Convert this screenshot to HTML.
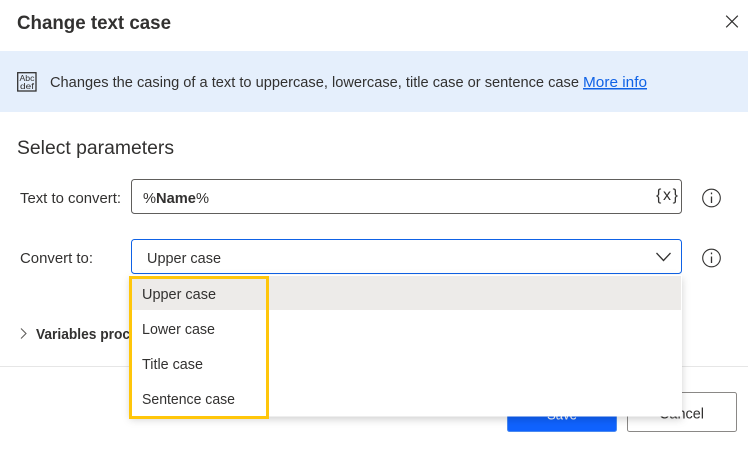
<!DOCTYPE html>
<html><head><meta charset="utf-8"><style>
html,body{margin:0;padding:0;background:#fff}
svg{display:block}
text{font-family:"Liberation Sans",sans-serif;font-size:15px;fill:#323130}
</style></head><body>
<svg width="748" height="450" viewBox="0 0 748 450" xmlns="http://www.w3.org/2000/svg">
<defs>
<filter id="s" x="-10%" y="-10%" width="120%" height="125%"><feDropShadow dx="0" dy="3" stdDeviation="4" flood-color="#000" flood-opacity=".18"/></filter>
</defs>
<rect width="748" height="450" fill="#fff"/>
<text x="17" y="29" textLength="154" lengthAdjust="spacingAndGlyphs" style="font-size:19px;font-weight:bold">Change text case</text>
<path d="M726.200 15.700l11.600 11.600M737.800 15.700l-11.600 11.600" stroke="#323130" stroke-width="1.2" fill="none"/>
<rect y="51" width="748" height="61" fill="#e5effc"/>
<rect x="17.700" y="72.700" width="18.300" height="18.300" fill="none" stroke="#323130" stroke-width="1.3"/>
<text x="19.500" y="81" textLength="15" lengthAdjust="spacingAndGlyphs" style="font-size:8.500px">Abc</text>
<text x="20" y="89" textLength="14" lengthAdjust="spacingAndGlyphs" style="font-size:8.500px">def</text>
<text x="50" y="87" textLength="529" lengthAdjust="spacingAndGlyphs">Changes the casing of a text to uppercase, lowercase, title case or sentence case</text>
<text x="583" y="87" textLength="64" lengthAdjust="spacingAndGlyphs" style="fill:#0f62e6" text-decoration="underline">More info</text>
<text x="17" y="154" textLength="157" lengthAdjust="spacingAndGlyphs" style="font-size:19px">Select parameters</text>
<text x="20" y="203" textLength="101" lengthAdjust="spacingAndGlyphs">Text to convert:</text>
<rect x="131.500" y="179.500" width="550" height="34" rx="3" fill="#fff" stroke="#605e5c"/>
<text x="143" y="203" textLength="66" lengthAdjust="spacingAndGlyphs">%<tspan font-weight="bold">Name</tspan>%</text>
<text x="656" y="200" textLength="22" lengthAdjust="spacing" style="font-size:16px">{x}</text>
<circle cx="711.500" cy="198" r="8.800" fill="none" stroke="#323130" stroke-width="1.1"/>
<path d="M711.500 196.500v6.500M711.500 192.500v1.700" stroke="#323130" stroke-width="1.3" fill="none"/>
<text x="20" y="263" textLength="73" lengthAdjust="spacingAndGlyphs">Convert to:</text>
<rect x="131.500" y="239.500" width="550" height="34" rx="3" fill="#fff" stroke="#0f62e6"/>
<text x="147" y="263" textLength="74" lengthAdjust="spacingAndGlyphs">Upper case</text>
<path d="M656.500 253l7 7.500 7-7.500" stroke="#323130" stroke-width="1.3" fill="none"/>
<circle cx="711.500" cy="258" r="8.800" fill="none" stroke="#323130" stroke-width="1.1"/>
<path d="M711.500 256.500v6.500M711.500 252.500v1.700" stroke="#323130" stroke-width="1.3" fill="none"/>
<path d="M21 328.500l5 5-5 5" stroke="#605e5c" stroke-width="1.1" fill="none"/>
<text x="36" y="339" textLength="94" lengthAdjust="spacingAndGlyphs" style="font-weight:bold">Variables proc</text>
<rect y="366" width="748" height="1" fill="#e6e6e6"/>
<rect x="507.500" y="392.500" width="109" height="39" rx="2" fill="#0f62fe" stroke="#4a8af0"/>
<text x="547" y="419.500" textLength="30" lengthAdjust="spacingAndGlyphs" style="fill:#fff">Save</text>
<rect x="627.500" y="392.500" width="109" height="39" rx="2" fill="#fff" stroke="#8a8886"/>
<text x="659" y="418.500" textLength="45" lengthAdjust="spacingAndGlyphs">Cancel</text>
<rect x="130" y="275" width="552" height="141.500" fill="#fff" filter="url(#s)"/>
<rect x="132" y="276" width="549" height="34" fill="#edebe9"/>
<text x="142" y="299" textLength="74" lengthAdjust="spacingAndGlyphs">Upper case</text>
<text x="142" y="334" textLength="73" lengthAdjust="spacingAndGlyphs">Lower case</text>
<text x="142" y="369" textLength="61" lengthAdjust="spacingAndGlyphs">Title case</text>
<text x="142" y="404" textLength="93" lengthAdjust="spacingAndGlyphs">Sentence case</text>
<rect x="130.500" y="277.500" width="137" height="140" fill="none" stroke="#ffc60a" stroke-width="3"/>
</svg>
</body></html>
